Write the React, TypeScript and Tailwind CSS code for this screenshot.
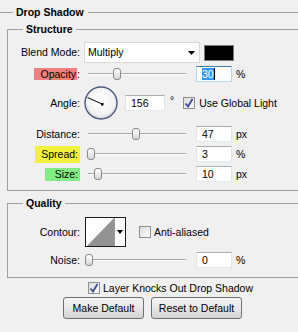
import React from "react";

const sans = "font-['Liberation_Sans',Arial,sans-serif]";

function Field({ value, width = 36, focused = false }: { value: string; width?: number; focused?: boolean }) {
  return (
    <div
      className={
        "flex h-[16px] shrink-0 items-center bg-white pl-[5px] leading-[12px] border " +
        (focused
          ? "border-[#b7d9ed] border-t-[#3d7bad]"
          : "border-[#e2e3ea] border-t-[#abadb3] border-b-[#e3e9ef]")
      }
      style={{ width }}
    >
      {focused ? (
        <>
          <span className="bg-[#3399ff] text-white">{value}</span>
          <span className="h-[12px] w-px bg-black" />
        </>
      ) : (
        value
      )}
    </div>
  );
}

function Slider({ pos }: { pos: number }) {
  return (
    <div className="relative ml-[4px] h-[14px] w-[104px] shrink-0">
      <div className="absolute left-[4px] right-[2px] top-[6px] h-[2px] border-t border-b border-t-[#a8a8a8] border-b-white" />
      <div
        className="absolute top-[1px] h-[12px] w-[8px] rounded-[3px] border border-[#8a8a8a] bg-gradient-to-b from-white to-[#d6d6d6]"
        style={{ left: pos }}
      />
    </div>
  );
}

function Check({ on }: { on: boolean }) {
  return (
    <div className="flex h-[12px] w-[12px] shrink-0 items-center justify-center border border-[#8e8f8f] bg-gradient-to-br from-[#dcdcdc] to-[#fbfbfb]">
      {on && (
        <svg width="10" height="10" viewBox="0 0 10 10">
          <path d="M1.5 5.5 L4 8.5 L8.5 1" fill="none" stroke="#3b4a9c" strokeWidth="1.8" />
        </svg>
      )}
    </div>
  );
}

function Label({ children }: { children: React.ReactNode }) {
  return <div className="flex w-[72px] shrink-0 items-center justify-end whitespace-nowrap">{children}</div>;
}

function Unit({ children }: { children: React.ReactNode }) {
  return <span className="ml-[4px]">{children}</span>;
}

function Dial() {
  return (
    <svg width="34" height="34" viewBox="0 0 34 34" className="ml-[4px] shrink-0">
      <defs>
        <radialGradient id="dialfill" cx="50%" cy="45%" r="55%">
          <stop offset="0%" stopColor="#ffffff" />
          <stop offset="75%" stopColor="#f4f4f4" />
          <stop offset="100%" stopColor="#d4d4d4" />
        </radialGradient>
      </defs>
      <circle cx="17" cy="17" r="16" fill="url(#dialfill)" stroke="#4b5a80" strokeWidth="1.4" />
      <line x1="18" y1="18" x2="3.5" y2="11.5" stroke="#000" strokeWidth="1" />
      <rect x="17" y="17" width="2.5" height="2.5" fill="#000" />
    </svg>
  );
}

export default function App() {
  return (
    <div className={"h-[332px] w-[298px] overflow-hidden bg-[#f0f0f0] text-[10.5px] leading-[13px] text-black " + sans}>
      <div className="mt-[6px] flex h-[13px] items-center">
        <div className="h-px w-[13px] bg-[#a0a0a0]" />
        <span className="ml-[3px] font-bold">Drop Shadow</span>
        <div className="ml-[4px] h-px flex-1 bg-[#a0a0a0]" />
      </div>

      <fieldset className="ml-[7px] mt-[4px] border border-r-0 border-[#a0a0a0] pb-[8px]">
        <legend className="ml-[15px] px-[3px] font-bold">Structure</legend>

        <div className="mt-[6px] flex h-[21px] items-center">
          <Label>Blend Mode:</Label>
          <div className="ml-[4px] flex h-[21px] w-[116px] items-center border border-[#dadada] bg-white pl-[3px]">
            Multiply
            <svg width="7" height="4" viewBox="0 0 7 4" className="ml-auto mr-[4px]">
              <path d="M0 0 H7 L3.5 4 Z" fill="#000" />
            </svg>
          </div>
          <div className="ml-[4px] h-[16px] w-[30px] border border-[#7a7a7a] bg-black" />
        </div>

        <div className="mt-[3px] flex h-[16px] items-center">
          <Label>
            <span className="h-[12px] bg-[#f08080] pl-[6px] pr-[1px] leading-[12px]">Opacity</span>:
          </Label>
          <Slider pos={29} />
          <div className="ml-[8px]">
            <Field value="30" focused />
          </div>
          <Unit>%</Unit>
        </div>

        <div className="mt-[4px] flex h-[34px] items-center">
          <Label>Angle:</Label>
          <Dial />
          <div className="ml-[7px]">
            <Field value="156" width={40} />
          </div>
          <span className="mb-[6px] ml-[5px]">°</span>
          <div className="ml-[9px]">
            <Check on />
          </div>
          <span className="ml-[4px]">Use Global Light</span>
        </div>

        <div className="mt-[6px] flex h-[16px] items-center">
          <Label>Distance:</Label>
          <Slider pos={48} />
          <div className="ml-[8px]">
            <Field value="47" />
          </div>
          <Unit>px</Unit>
        </div>

        <div className="mt-[4px] flex h-[16px] items-center">
          <Label>
            <span className="flex h-[17px] items-center bg-[#f2f23c] pl-[6px] pr-[2px]">Spread:</span>
          </Label>
          <Slider pos={3} />
          <div className="ml-[8px]">
            <Field value="3" />
          </div>
          <Unit>%</Unit>
        </div>

        <div className="mt-[4px] flex h-[16px] items-center">
          <Label>
            <span className="flex h-[13px] items-center bg-[#80ee80] pl-[10px] pr-[2px]">Size:</span>
          </Label>
          <Slider pos={10} />
          <div className="ml-[8px]">
            <Field value="10" />
          </div>
          <Unit>px</Unit>
        </div>
      </fieldset>

      <fieldset className="ml-[7px] mt-[6px] border border-r-0 border-[#a0a0a0] pb-[9px]">
        <legend className="ml-[15px] px-[3px] font-bold">Quality</legend>

        <div className="mt-[7px] flex h-[30px] items-center">
          <Label>Contour:</Label>
          <div className="ml-[5px] flex h-[30px] w-[41px] border border-[#1c1c1c] bg-white">
            <svg width="28" height="28" viewBox="0 0 28 28" className="shrink-0">
              <path d="M1 28 L28 0 V28 Z" fill="#939393" />
            </svg>
            <div className="flex flex-1 items-center justify-center border-l border-[#9a9a9a]">
              <svg width="6" height="4" viewBox="0 0 6 4">
                <path d="M0 0 H6 L3 4 Z" fill="#000" />
              </svg>
            </div>
          </div>
          <div className="ml-[13px]">
            <Check on={false} />
          </div>
          <span className="ml-[3px]">Anti-aliased</span>
        </div>

        <div className="mt-[5px] flex h-[16px] items-center">
          <Label>Noise:</Label>
          <Slider pos={1} />
          <div className="ml-[8px]">
            <Field value="0" />
          </div>
          <Unit>%</Unit>
        </div>
      </fieldset>

      <div className="ml-[88px] mt-[4px] flex h-[12px] items-center">
        <Check on />
        <span className="ml-[3px]">Layer Knocks Out Drop Shadow</span>
      </div>

      <div className="ml-[63px] mt-[3px] flex gap-[7px]">
        <button className="h-[22px] w-[81px] rounded-[3px] border border-[#707070] bg-gradient-to-b from-[#f4f4f4] via-[#e8e8e8] to-[#d2d2d2]">
          Make Default
        </button>
        <button className="h-[22px] w-[91px] rounded-[3px] border border-[#707070] bg-gradient-to-b from-[#f4f4f4] via-[#e8e8e8] to-[#d2d2d2]">
          Reset to Default
        </button>
      </div>
    </div>
  );
}
